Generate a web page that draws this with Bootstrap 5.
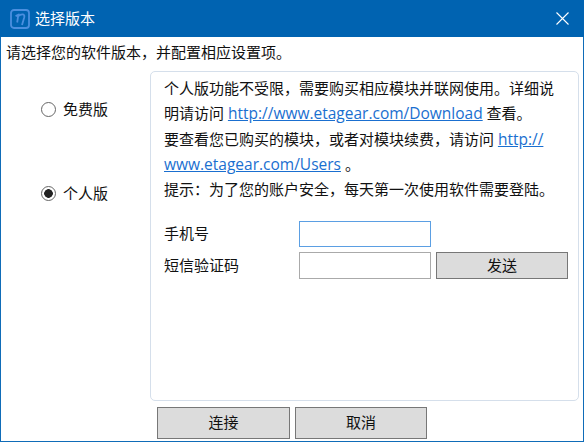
<!DOCTYPE html>
<html lang="zh-CN">
<head>
    <meta charset="UTF-8">
    <meta name="viewport" content="width=device-width, initial-scale=1.0">
    <title>选择版本</title>
    <link href="https://cdn.jsdelivr.net/npm/bootstrap@5.3.0/dist/css/bootstrap.min.css" rel="stylesheet">
    <style>
        html, body {
            height: 100%;
            overflow: hidden;
        }
        body {
            background: #fff;
            color: #111;
            font-family: "Open Sans", "Noto Sans CJK SC", sans-serif;
            font-size: 15px;
        }
        .app-window {
            height: 442px;
            border: 1px solid #0f6cb8;
            border-top: 0;
        }
        .title-bar {
            height: 37px;
            margin: 0 -1px;
            padding: 0 10px;
            background: #0063b1;
            color: #fff;
            line-height: 1;
        }
        .title-text {
            margin-left: 5px;
        }
        .title-close {
            width: 13px;
            height: 13px;
            margin-right: 5px;
        }
        .intro-line {
            height: 34px;
            padding-left: 5px;
            line-height: 31px;
        }
        .main-area {
            height: 330px;
        }
        .version-col {
            width: 149px;
            padding: 25px 0 0 40px;
        }
        .version-item {
            height: 26px;
            margin-bottom: 58px;
            gap: 7px;
        }
        .version-item .form-check-input {
            width: 15px;
            height: 15px;
            margin: 0;
            border: 1px solid #666;
            background-color: #fff;
            box-shadow: none;
        }
        .version-item .form-check-input:checked {
            background-image: radial-gradient(circle, #222 0, #222 4px, transparent 4.6px);
            background-size: 100% 100%;
        }
        .info-panel {
            width: 429px;
            padding: 4px 10px 0 13px;
            border: 1px solid #d5dfeb;
            border-radius: 5px;
            line-height: 25.25px;
        }
        .info-panel a {
            color: #1a6fd0;
            font-size: 15.5px;
        }
        .field-row {
            gap: 5px;
        }
        .phone-row {
            margin-top: 19px;
        }
        .code-row {
            margin-top: 5px;
        }
        .field-label {
            width: 130px;
            flex: none;
            padding-bottom: 2px;
            line-height: 22px;
        }
        .field-input {
            width: 132px;
            height: 27px;
            flex: none;
            padding: 0 4px;
            border: 1px solid #aaa;
            border-radius: 0;
        }
        .field-input.is-focused {
            height: 26px;
            border-color: #5b9fe3;
            box-shadow: none;
        }
        .grey-btn {
            height: 100%;
            padding: 0 0 2px;
            background: #dcdcdc;
            border: 1px solid #777;
            border-radius: 0;
            color: #111;
            font-size: 15px;
        }
        .send-btn {
            width: 132px;
            height: 27px;
            flex: none;
        }
        .footer-btns {
            height: 32px;
            margin-top: 6px;
            padding-left: 156px;
            gap: 5px;
        }
        .footer-btns .grey-btn {
            width: 133px;
        }
        .footer-btns .grey-btn + .grey-btn {
            width: 132px;
        }
    </style>
</head>
<body class="m-0">
    <div class="app-window d-flex flex-column">
        <div class="title-bar d-flex align-items-center">
            <svg width="20" height="20" viewBox="0 0 20 20" fill="none" stroke="#4b8fdf" stroke-width="1.8">
                <rect x="1" y="1" width="18" height="18" rx="3"/>
                <path d="M5.5 7 L8.3 5.8 L7.2 13.5 M8.2 7.2 Q10.5 5 13.3 5.5 Q14.8 6 14.2 8.5 L12 16"/>
            </svg>
            <span class="title-text flex-grow-1">选择版本</span>
            <svg class="title-close" viewBox="0 0 13 13" stroke="#fff" stroke-width="1.1" fill="none">
                <path d="M0.5 0.5 L12.5 12.5 M12.5 0.5 L0.5 12.5"/>
            </svg>
        </div>
        <div class="intro-line">请选择您的软件版本，并配置相应设置项。</div>
        <div class="main-area d-flex">
            <div class="version-col">
                <div class="version-item d-flex align-items-center">
                    <input class="form-check-input" type="radio" name="edition" id="free">
                    <label for="free">免费版</label>
                </div>
                <div class="version-item d-flex align-items-center">
                    <input class="form-check-input" type="radio" name="edition" id="personal" checked>
                    <label for="personal">个人版</label>
                </div>
            </div>
            <div class="info-panel">
                <div>个人版功能不受限，需要购买相应模块并联网使用。详细说<br>明请访问 <a href="#">http://www.etagear.com/Download</a> 查看。<br>要查看您已购买的模块，或者对模块续费，请访问 <a href="#">http://<br>www.etagear.com/Users</a> 。<br>提示：为了您的账户安全，每天第一次使用软件需要登陆。</div>
                <div class="field-row phone-row d-flex align-items-center">
                    <label class="field-label" for="phone">手机号</label>
                    <input class="form-control field-input is-focused" type="text" id="phone">
                </div>
                <div class="field-row code-row d-flex align-items-center">
                    <label class="field-label" for="code">短信验证码</label>
                    <input class="form-control field-input" type="text" id="code">
                    <button class="btn grey-btn send-btn" type="button">发送</button>
                </div>
            </div>
        </div>
        <div class="footer-btns d-flex">
            <button class="btn grey-btn" type="button">连接</button>
            <button class="btn grey-btn" type="button">取消</button>
        </div>
    </div>
    <script src="https://cdn.jsdelivr.net/npm/bootstrap@5.3.0/dist/js/bootstrap.bundle.min.js"></script>
</body>
</html>
